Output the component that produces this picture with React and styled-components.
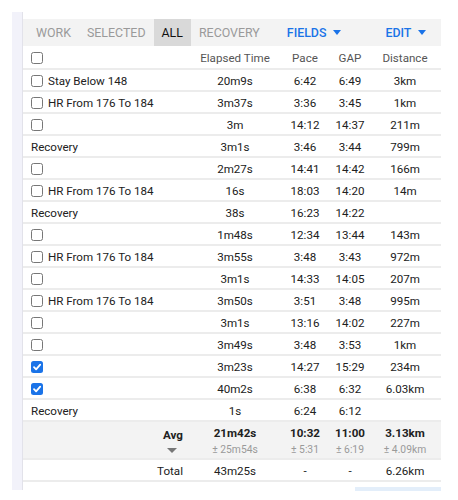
import React from "react";
import styled, { createGlobalStyle } from "styled-components";

const Global = createGlobalStyle`
  html, body { margin: 0; padding: 0; background: #fff; }
  body { font-family: Roboto, "Liberation Sans", Arial, sans-serif; color: #212121; }
`;

const Page = styled.div`
  display: flex;
  padding: 12px 0 10px 12px;
  width: 458px;
  box-sizing: border-box;
`;

const SideRail = styled.div`
  width: 10px;
  background: #f2f2fa;
  border-right: 1px solid #e2e2ea;
  height: 478px;
  flex: none;
`;

const Panel = styled.div`
  width: 418px;
  padding-top: 7px;
  display: flex;
  flex-direction: column;
`;

const Toolbar = styled.div`
  display: flex;
  align-items: stretch;
  height: 27px;
  background: #f3f3f3;
  padding-left: 5px;
`;

const Tab = styled.div`
  display: flex;
  align-items: center;
  padding: 0 8px;
  font-size: 12.4px;
  text-transform: uppercase;
  color: ${(p) => (p.$active ? "#111" : "#9a9a9a")};
  background: ${(p) => (p.$active ? "#d9d9d9" : "transparent")};
`;

const Menu = styled.div`
  display: flex;
  align-items: center;
  gap: 7px;
  margin-left: ${(p) => p.$ml}px;
  font-size: 12.4px;
  font-weight: 500;
  color: #1a73e8;
  text-transform: uppercase;
`;

const Caret = styled.span`
  width: 0;
  height: 0;
  border-left: 4.5px solid transparent;
  border-right: 4.5px solid transparent;
  border-top: 5px solid #1a73e8;
`;

const Grid = styled.div`
  display: flex;
  flex-direction: column;
  font-size: 11.6px;
`;

const Row = styled.div`
  display: grid;
  grid-template-columns: 168px 88px 52px 38px 72px;
  align-items: center;
  height: ${(p) => p.$h || 22}px;
  box-sizing: border-box;
  padding-top: 2px;
  border-bottom: 2px solid #ececec;
  background: ${(p) => (p.$shade ? "#f3f3f3" : "#fff")};
`;

const Th = styled.div`
  color: #555;
  text-align: center;
  white-space: nowrap;
`;

const NameCell = styled.div`
  padding-left: 8px;
  display: flex;
  align-items: center;
  gap: 5px;
  white-space: nowrap;
`;

const Num = styled.div`
  text-align: center;
  white-space: nowrap;
  font-weight: ${(p) => (p.$bold ? 700 : 400)};
`;

const SumLabel = styled.div`
  text-align: right;
  padding-right: 8px;
  font-weight: ${(p) => (p.$bold ? 700 : 400)};
`;

const Stack = styled.div`
  display: flex;
  flex-direction: column;
  align-items: ${(p) => p.$align || "center"};
  gap: 3px;
`;

const Sub = styled.span`
  font-size: 10.3px;
  color: #9a9a9a;
  font-weight: 400;
`;

const DownCaret = styled.span`
  width: 0;
  height: 0;
  margin: 3px 6px 2px 0;
  border-left: 5px solid transparent;
  border-right: 5px solid transparent;
  border-top: 5px solid #777;
`;

const Box = styled.span`
  display: inline-flex;
  align-items: center;
  justify-content: center;
  width: 12px;
  height: 12px;
  margin-top: -1px;
  box-sizing: border-box;
  border-radius: 2.5px;
  border: ${(p) => (p.$checked ? "none" : "1.3px solid #777")};
  background: ${(p) => (p.$checked ? "#1a73e8" : "#fff")};
  flex: none;
`;

const Check = ({ checked }) => (
  <Box $checked={checked}>
    {checked && (
      <svg width="10" height="10" viewBox="0 0 10 10">
        <path d="M2 5.2 L4.1 7.3 L8.2 2.6" fill="none" stroke="#fff" strokeWidth="1.8" strokeLinecap="round" strokeLinejoin="round" />
      </svg>
    )}
  </Box>
);

const BottomStrip = styled.div`
  align-self: flex-end;
  margin-top: 5px;
  width: 86px;
  height: 4px;
  background: #e3eefa;
`;

const rows = [
  { c: 0, n: "Stay Below 148", e: "20m9s", p: "6:42", g: "6:49", d: "3km" },
  { c: 0, n: "HR From 176 To 184", e: "3m37s", p: "3:36", g: "3:45", d: "1km" },
  { c: 0, n: "", e: "3m", p: "14:12", g: "14:37", d: "211m" },
  { r: 1, n: "Recovery", e: "3m1s", p: "3:46", g: "3:44", d: "799m" },
  { c: 0, n: "", e: "2m27s", p: "14:41", g: "14:42", d: "166m" },
  { c: 0, n: "HR From 176 To 184", e: "16s", p: "18:03", g: "14:20", d: "14m" },
  { r: 1, n: "Recovery", e: "38s", p: "16:23", g: "14:22", d: "" },
  { c: 0, n: "", e: "1m48s", p: "12:34", g: "13:44", d: "143m" },
  { c: 0, n: "HR From 176 To 184", e: "3m55s", p: "3:48", g: "3:43", d: "972m" },
  { c: 0, n: "", e: "3m1s", p: "14:33", g: "14:05", d: "207m" },
  { c: 0, n: "HR From 176 To 184", e: "3m50s", p: "3:51", g: "3:48", d: "995m" },
  { c: 0, n: "", e: "3m1s", p: "13:16", g: "14:02", d: "227m" },
  { c: 0, n: "", e: "3m49s", p: "3:48", g: "3:53", d: "1km" },
  { c: 1, n: "", e: "3m23s", p: "14:27", g: "15:29", d: "234m" },
  { c: 1, n: "", e: "40m2s", p: "6:38", g: "6:32", d: "6.03km" },
  { r: 1, n: "Recovery", e: "1s", p: "6:24", g: "6:12", d: "" },
];

const avg = [
  ["21m42s", "± 25m54s"],
  ["10:32", "± 5:31"],
  ["11:00", "± 6:19"],
  ["3.13km", "± 4.09km"],
];

export default function App() {
  return (
    <>
      <Global />
      <Page>
        <SideRail />
        <Panel>
          <Toolbar>
            <Tab>Work</Tab>
            <Tab>Selected</Tab>
            <Tab $active>All</Tab>
            <Tab>Recovery</Tab>
            <Menu $ml={19}>Fields<Caret /></Menu>
            <Menu $ml={44}>Edit<Caret /></Menu>
          </Toolbar>
          <Grid>
            <Row $h={24}>
              <NameCell><Check /></NameCell>
              <Th>Elapsed Time</Th>
              <Th>Pace</Th>
              <Th>GAP</Th>
              <Th>Distance</Th>
            </Row>
            {rows.map((r, i) => (
              <Row key={i}>
                <NameCell>
                  {!r.r && <Check checked={!!r.c} />}
                  {r.n && <span>{r.n}</span>}
                </NameCell>
                <Num>{r.e}</Num>
                <Num>{r.p}</Num>
                <Num>{r.g}</Num>
                <Num>{r.d}</Num>
              </Row>
            ))}
            <Row $shade $h={38}>
              <SumLabel $bold>
                <Stack $align="flex-end">
                  <span>Avg</span>
                  <DownCaret />
                </Stack>
              </SumLabel>
              {avg.map(([v, s], i) => (
                <Num key={i} $bold>
                  <Stack>
                    <span>{v}</span>
                    <Sub>{s}</Sub>
                  </Stack>
                </Num>
              ))}
            </Row>
            <Row>
              <SumLabel>Total</SumLabel>
              <Num>43m25s</Num>
              <Num>-</Num>
              <Num>-</Num>
              <Num>6.26km</Num>
            </Row>
          </Grid>
          <BottomStrip />
        </Panel>
      </Page>
    </>
  );
}
